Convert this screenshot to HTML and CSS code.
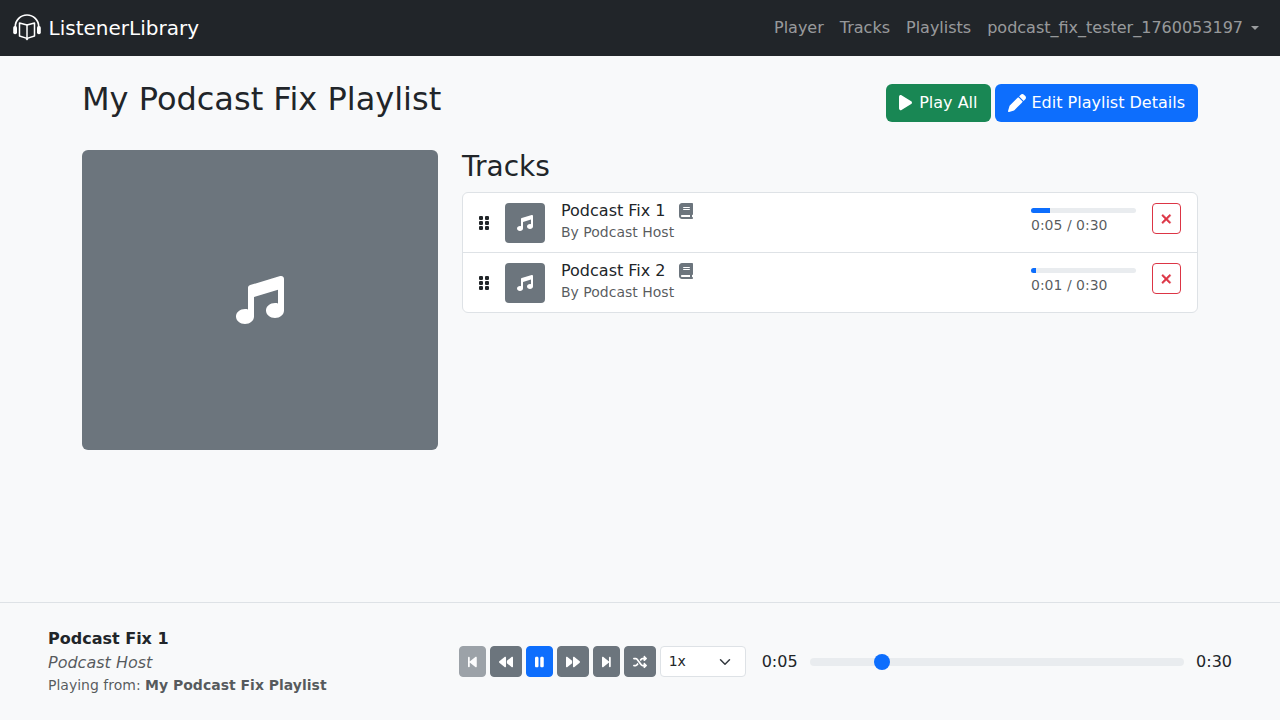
FILE: index.html
```html
<!DOCTYPE html>
<html lang="en">
<head>
<meta charset="utf-8">
<title>ListenerLibrary</title>
<link rel="stylesheet" href="styles.css">
</head>
<body>
<div class="app">
  <nav class="navbar">
    <a class="brand" href="#">
      <svg class="logo" viewBox="0 0 28 28" stroke="#fff" stroke-linejoin="round" stroke-linecap="round">
        <path d="M2.300 14V12.700a11.700 11.700 0 0 1 23.400 0V14" stroke-width="1.700"/>
        <rect x="0.200" y="12" width="3.800" height="8.200" rx="1.800" fill="#fff" stroke="none"/>
        <rect x="24" y="12" width="3.800" height="8.200" rx="1.800" fill="#fff" stroke="none"/>
        <path d="M14 11 6.500 9V22l7.500 2.400L21.500 22V9z" stroke-width="1.500"/>
        <path d="M14 11V24.400" stroke-width="1.500"/>
        <path d="M12.300 24.700 14 26.400l1.700-1.700z" fill="#fff" stroke="none"/>
      </svg>
      <span>ListenerLibrary</span>
    </a>
    <div class="nav-links">
      <a href="#">Player</a>
      <a href="#">Tracks</a>
      <a href="#">Playlists</a>
      <a href="#" class="dropdown">podcast_fix_tester_1760053197</a>
    </div>
  </nav>

  <main class="container">
    <header class="page-head">
      <h1>My Podcast Fix Playlist</h1>
      <div class="head-actions">
        <button class="btn btn-success">
          <svg class="icon" viewBox="0 0 384 512"><path d="M73 39c-14.800-9.100-33.400-9.400-48.500-.9S0 62.600 0 80V432c0 17.400 9.400 33.400 24.500 41.900s33.700 8.100 48.500-.9L361 297c14.300-8.700 23-24.200 23-41s-8.700-32.200-23-41L73 39z"/></svg>
          Play All
        </button>
        <button class="btn btn-primary">
          <svg class="icon" viewBox="0 0 512 512"><path d="M410.300 231l11.300-11.300-33.900-33.900-62.100-62.100L291.700 89.800l-11.300 11.300-22.600 22.600L58.600 322.900c-10.400 10.400-18 23.300-22.200 37.400L1 480.700c-2.500 8.400-.2 17.500 6.100 23.700s15.300 8.500 23.700 6.100l120.300-35.400c14.100-4.200 27-11.800 37.400-22.200L387.700 253.700 410.300 231zM362.700 18.700L348.300 33.200 325.700 55.800 314.300 67.100l33.900 33.900 62.100 62.100 33.900 33.900 11.300-11.300 22.600-22.600 14.500-14.500c25-25 25-65.500 0-90.500L453.300 18.700c-25-25-65.500-25-90.500 0z"/></svg>
          Edit Playlist Details
        </button>
      </div>
    </header>

    <div class="content">
      <div class="cover">
        <svg class="cover-icon" viewBox="0 0 512 512"><path d="M499.100 6.300c8.100 6 12.900 15.600 12.900 25.700v72V368c0 44.200-43 80-96 80s-96-35.800-96-80s43-80 96-80c11.200 0 22 1.600 32 4.600V147L192 223.800V432c0 44.200-43 80-96 80s-96-35.800-96-80s43-80 96-80c11.200 0 22 1.600 32 4.600V200 128c0-14.100 9.300-26.600 22.800-30.700l320-96c10.100-3 21-1.200 29.300 5z"/></svg>
      </div>
      <section class="tracks">
        <h2>Tracks</h2>
        <ul class="track-list">
          <li class="track">
            <svg class="grip" viewBox="0 0 320 512"><path d="M40 352h48c22.100 0 40 17.900 40 40v48c0 22.100-17.900 40-40 40H40c-22.100 0-40-17.900-40-40v-48c0-22.100 17.900-40 40-40zm192 0h48c22.100 0 40 17.900 40 40v48c0 22.100-17.900 40-40 40h-48c-22.100 0-40-17.900-40-40v-48c0-22.100 17.900-40 40-40zM40 192h48c22.100 0 40 17.900 40 40v48c0 22.100-17.900 40-40 40H40c-22.100 0-40-17.900-40-40v-48c0-22.100 17.900-40 40-40zm192 0h48c22.100 0 40 17.900 40 40v48c0 22.100-17.900 40-40 40h-48c-22.100 0-40-17.900-40-40v-48c0-22.100 17.900-40 40-40zM40 32h48c22.100 0 40 17.900 40 40v48c0 22.100-17.900 40-40 40H40c-22.100 0-40-17.900-40-40V72c0-22.100 17.900-40 40-40zm192 0h48c22.100 0 40 17.900 40 40v48c0 22.100-17.900 40-40 40h-48c-22.100 0-40-17.900-40-40V72c0-22.100 17.900-40 40-40z"/></svg>
            <div class="thumb"><svg class="thumb-icon" viewBox="0 0 512 512"><path d="M499.100 6.300c8.100 6 12.900 15.600 12.900 25.700v72V368c0 44.200-43 80-96 80s-96-35.800-96-80s43-80 96-80c11.200 0 22 1.600 32 4.600V147L192 223.800V432c0 44.200-43 80-96 80s-96-35.800-96-80s43-80 96-80c11.200 0 22 1.600 32 4.600V200 128c0-14.100 9.300-26.600 22.800-30.700l320-96c10.100-3 21-1.200 29.300 5z"/></svg></div>
            <div class="track-info">
              <div class="track-name">Podcast Fix 1
                <svg class="book" viewBox="0 0 448 512"><path d="M96 0C43 0 0 43 0 96V416c0 53 43 96 96 96H384h32c17.700 0 32-14.300 32-32s-14.300-32-32-32V384c17.700 0 32-14.300 32-32V32c0-17.700-14.300-32-32-32H384 96zm0 384H352v64H96c-17.700 0-32-14.300-32-32s14.300-32 32-32zm32-240c0-8.800 7.200-16 16-16H336c8.800 0 16 7.200 16 16s-7.200 16-16 16H144c-8.800 0-16-7.200-16-16zm16 48H336c8.800 0 16 7.200 16 16s-7.200 16-16 16H144c-8.800 0-16-7.200-16-16s7.200-16 16-16z"/></svg>
              </div>
              <div class="track-by">By Podcast Host</div>
            </div>
            <div class="track-progress">
              <div class="bar"><div class="bar-fill" style="width:18%"></div></div>
              <div class="bar-time">0:05 / 0:30</div>
            </div>
            <button class="btn-del"><svg class="x" viewBox="0 0 384 512"><path d="M342.600 150.600c12.500-12.500 12.500-32.800 0-45.300s-32.800-12.500-45.300 0L192 210.700 86.600 105.400c-12.500-12.500-32.800-12.500-45.300 0s-12.500 32.800 0 45.300L146.700 256 41.400 361.400c-12.500 12.500-12.500 32.800 0 45.300s32.800 12.500 45.300 0L192 301.300 297.400 406.600c12.500 12.500 32.800 12.500 45.300 0s12.500-32.800 0-45.300L237.300 256 342.600 150.600z"/></svg></button>
          </li>
          <li class="track">
            <svg class="grip" viewBox="0 0 320 512"><path d="M40 352h48c22.100 0 40 17.900 40 40v48c0 22.100-17.900 40-40 40H40c-22.100 0-40-17.900-40-40v-48c0-22.100 17.900-40 40-40zm192 0h48c22.100 0 40 17.900 40 40v48c0 22.100-17.900 40-40 40h-48c-22.100 0-40-17.900-40-40v-48c0-22.100 17.900-40 40-40zM40 192h48c22.100 0 40 17.900 40 40v48c0 22.100-17.900 40-40 40H40c-22.100 0-40-17.900-40-40v-48c0-22.100 17.900-40 40-40zm192 0h48c22.100 0 40 17.900 40 40v48c0 22.100-17.900 40-40 40h-48c-22.100 0-40-17.900-40-40v-48c0-22.100 17.900-40 40-40zM40 32h48c22.100 0 40 17.900 40 40v48c0 22.100-17.900 40-40 40H40c-22.100 0-40-17.900-40-40V72c0-22.100 17.900-40 40-40zm192 0h48c22.100 0 40 17.900 40 40v48c0 22.100-17.900 40-40 40h-48c-22.100 0-40-17.900-40-40V72c0-22.100 17.900-40 40-40z"/></svg>
            <div class="thumb"><svg class="thumb-icon" viewBox="0 0 512 512"><path d="M499.100 6.300c8.100 6 12.900 15.600 12.900 25.700v72V368c0 44.200-43 80-96 80s-96-35.800-96-80s43-80 96-80c11.200 0 22 1.600 32 4.600V147L192 223.800V432c0 44.200-43 80-96 80s-96-35.800-96-80s43-80 96-80c11.200 0 22 1.600 32 4.600V200 128c0-14.100 9.300-26.600 22.800-30.700l320-96c10.100-3 21-1.200 29.300 5z"/></svg></div>
            <div class="track-info">
              <div class="track-name">Podcast Fix 2
                <svg class="book" viewBox="0 0 448 512"><path d="M96 0C43 0 0 43 0 96V416c0 53 43 96 96 96H384h32c17.700 0 32-14.300 32-32s-14.300-32-32-32V384c17.700 0 32-14.300 32-32V32c0-17.700-14.300-32-32-32H384 96zm0 384H352v64H96c-17.700 0-32-14.300-32-32s14.300-32 32-32zm32-240c0-8.800 7.200-16 16-16H336c8.800 0 16 7.200 16 16s-7.200 16-16 16H144c-8.800 0-16-7.200-16-16zm16 48H336c8.800 0 16 7.200 16 16s-7.200 16-16 16H144c-8.800 0-16-7.200-16-16s7.200-16 16-16z"/></svg>
              </div>
              <div class="track-by">By Podcast Host</div>
            </div>
            <div class="track-progress">
              <div class="bar"><div class="bar-fill" style="width:5%"></div></div>
              <div class="bar-time">0:01 / 0:30</div>
            </div>
            <button class="btn-del"><svg class="x" viewBox="0 0 384 512"><path d="M342.600 150.600c12.500-12.500 12.500-32.800 0-45.300s-32.800-12.500-45.300 0L192 210.700 86.600 105.400c-12.500-12.500-32.800-12.500-45.300 0s-12.500 32.800 0 45.300L146.700 256 41.400 361.400c-12.500 12.500-12.500 32.800 0 45.300s32.800 12.500 45.300 0L192 301.300 297.400 406.600c12.500 12.500 32.800 12.500 45.300 0s12.500-32.800 0-45.300L237.300 256 342.600 150.600z"/></svg></button>
          </li>
        </ul>
      </section>
    </div>
  </main>

  <footer class="player">
    <div class="now-playing">
      <div class="np-title">Podcast Fix 1</div>
      <div class="np-artist">Podcast Host</div>
      <div class="np-from">Playing from: <strong>My Podcast Fix Playlist</strong></div>
    </div>
    <div class="controls">
      <button class="ctl ctl-disabled"><svg viewBox="0 0 320 512"><path d="M267.500 440.600c9.500 7.900 22.800 9.700 34.100 4.400s18.400-16.600 18.400-29V96c0-12.400-7.200-23.700-18.400-29s-24.500-3.600-34.100 4.400l-192 160L64 241V96c0-17.700-14.300-32-32-32S0 78.300 0 96V416c0 17.700 14.300 32 32 32s32-14.300 32-32V271l11.500 9.600 192 160z"/></svg></button>
      <button class="ctl"><svg viewBox="0 0 512 512"><path d="M459.500 440.600c9.500 7.900 22.800 9.700 34.100 4.400s18.400-16.600 18.400-29V96c0-12.400-7.200-23.700-18.400-29s-24.500-3.600-34.100 4.400L288 214.300V256v41.700L459.500 440.600zM256 352V256 128 96c0-12.400-7.200-23.700-18.400-29s-24.500-3.600-34.100 4.400l-192 160C4.200 237.500 0 246.500 0 256s4.200 18.500 11.500 24.600l192 160c9.500 7.900 22.800 9.700 34.100 4.400s18.400-16.600 18.400-29V352z"/></svg></button>
      <button class="ctl ctl-primary"><svg viewBox="0 0 320 512"><path d="M48 64C21.500 64 0 85.500 0 112V400c0 26.500 21.500 48 48 48H80c26.500 0 48-21.500 48-48V112c0-26.500-21.500-48-48-48H48zm192 0c-26.500 0-48 21.500-48 48V400c0 26.500 21.500 48 48 48h32c26.500 0 48-21.500 48-48V112c0-26.500-21.500-48-48-48H240z"/></svg></button>
      <button class="ctl"><svg viewBox="0 0 512 512"><path d="M52.500 440.600c-9.500 7.900-22.800 9.700-34.100 4.400S0 428.400 0 416V96C0 83.600 7.200 72.300 18.400 67s24.500-3.600 34.100 4.400L224 214.300V256v41.700L52.500 440.600zM256 352V256 128 96c0-12.400 7.200-23.700 18.400-29s24.500-3.600 34.100 4.400l192 160c7.300 6.100 11.500 15.100 11.500 24.600s-4.200 18.500-11.500 24.600l-192 160c-9.500 7.900-22.800 9.700-34.100 4.400s-18.400-16.600-18.400-29V352z"/></svg></button>
      <button class="ctl"><svg viewBox="0 0 320 512"><path d="M52.500 440.600c-9.500 7.900-22.800 9.700-34.100 4.400S0 428.400 0 416V96C0 83.600 7.200 72.300 18.400 67s24.500-3.600 34.100 4.400l192 160L256 241V96c0-17.700 14.300-32 32-32s32 14.300 32 32V416c0 17.700-14.300 32-32 32s-32-14.300-32-32V271l-11.500 9.600-192 160z"/></svg></button>
      <button class="ctl"><svg viewBox="0 0 512 512"><path d="M403.800 34.400c12-5 25.700-2.200 34.900 6.900l64 64c6 6 9.400 14.100 9.400 22.600s-3.400 16.600-9.400 22.600l-64 64c-9.200 9.200-22.900 11.900-34.900 6.900s-19.800-16.600-19.800-29.600V160H352c-10.100 0-19.600 4.700-25.600 12.800L284 229.300 244 176l31.200-41.600C293.300 110.200 321.800 96 352 96h32V64c0-12.900 7.800-24.600 19.800-29.600zM164 282.700L204 336l-31.200 41.600C154.700 401.800 126.200 416 96 416H32c-17.700 0-32-14.300-32-32s14.300-32 32-32H96c10.100 0 19.600-4.700 25.600-12.800L164 282.700zm274.600 188c-9.200 9.200-22.900 11.900-34.900 6.900s-19.800-16.600-19.800-29.600V416H352c-30.200 0-58.700-14.200-76.800-38.400L121.600 172.800c-6-8.100-15.500-12.800-25.600-12.800H32c-17.700 0-32-14.300-32-32s14.300-32 32-32H96c30.200 0 58.700 14.200 76.800 38.400L326.400 339.200c6 8.100 15.500 12.800 25.600 12.800h32V320c0-12.900 7.800-24.600 19.800-29.600s25.700-2.200 34.900 6.900l64 64c6 6 9.400 14.100 9.400 22.600s-3.400 16.600-9.400 22.600l-64 64z"/></svg></button>
      <div class="speed">
        <span>1x</span>
        <svg class="chev" viewBox="0 0 16 16" stroke="#343a40" stroke-width="2" stroke-linecap="round" stroke-linejoin="round"><path d="m2 5 6 6 6-6"/></svg>
      </div>
      <span class="time time-cur">0:05</span>
      <div class="seek"><div class="seek-thumb" style="left:19.25%"></div></div>
      <span class="time">0:30</span>
    </div>
  </footer>
</div>
</body>
</html>
```

FILE: styles.css
```css
* { box-sizing: border-box; }
html, body { margin: 0; padding: 0; }
body {
  font-family: "DejaVu Sans", sans-serif;
  font-size: 16px;
  line-height: 1.5;
  color: #212529;
  background: #f8f9fa;
}
a { text-decoration: none; color: inherit; }
svg { fill: currentColor; display: block; }
button { font: inherit; cursor: pointer; }

.app { min-height: 100vh; height: 720px; display: flex; flex-direction: column; }

.navbar {
  height: 56px;
  flex: none;
  background: #212529;
  display: flex;
  align-items: center;
  justify-content: space-between;
  padding: 0 13px 0 12px;
}
.brand { display: flex; align-items: center; gap: 7.6px; color: #fff; font-size: 20px; }
.logo { width: 28px; height: 28px; margin-left: 1px; fill: none; }
.nav-links { display: flex; color: rgba(255,255,255,.55); }
.nav-links a { padding: 8px; }
.dropdown { display: flex; align-items: center; }
.dropdown::after {
  content: "";
  margin-left: 8px;
  border-top: 4.8px solid currentColor;
  border-left: 4.8px solid transparent;
  border-right: 4.8px solid transparent;
}

.container { flex: 1; width: 1116px; margin: 0 auto; }
.page-head {
  display: flex;
  justify-content: space-between;
  align-items: flex-start;
  padding-top: 24px;
  margin-bottom: 28px;
}
h1 { margin: 0; font-size: 32px; font-weight: 400; line-height: 38px; }
.head-actions { display: flex; gap: 4px; margin-top: 4px; }
.btn {
  display: flex;
  align-items: center;
  gap: 4px;
  height: 38px;
  padding: 0 12px;
  border: 1px solid transparent;
  border-radius: 6px;
  color: #fff;
  white-space: nowrap;
}
.btn-success { background: #198754; }
.btn-primary { background: #0d6efd; }
.icon { width: 16px; height: 16px; }
.btn-success .icon { width: 13px; height: 17.3px; margin-right: 3px; }
.btn-primary .icon { width: 18px; height: 18px; margin-right: 2px; }

.content { display: grid; grid-template-columns: 356px 736px; column-gap: 24px; }
.cover {
  height: 300px;
  background: #6c757d;
  border-radius: 6px;
  display: flex;
  align-items: center;
  justify-content: center;
  color: #fff;
}
.cover-icon { width: 48px; height: 48px; }

h2 { margin: 0 0 8px; font-size: 28px; font-weight: 400; line-height: 34px; }
.track-list {
  list-style: none;
  margin: 0;
  padding: 0;
  background: #fff;
  border: 1px solid #dee2e6;
  border-radius: 6px;
}
.track {
  display: flex;
  align-items: flex-start;
  height: 60px;
  padding: 10px 16px 0 15px;
  border-bottom: 1px solid #dee2e6;
}
.track:last-child { height: 59px; border-bottom: 0; }
.grip { width: 12px; height: 16px; margin-top: 12px; margin-right: 15px; flex: none; }
.thumb {
  width: 40px;
  height: 40px;
  flex: none;
  border-radius: 4px;
  background: #6c757d;
  color: #fff;
  display: flex;
  align-items: center;
  justify-content: center;
  margin-right: 16px;
}
.thumb-icon { width: 16px; height: 16px; }
.track-info { flex: 1; margin-top: -4px; }
.track-name { display: flex; align-items: center; gap: 13px; height: 24px; }
.book { width: 14px; height: 16px; margin-top: -1px; color: #6c757d; }
.track-by { font-size: 14px; line-height: 21px; margin-top: -1px; color: rgba(33,37,41,.75); }
.track-progress { width: 105px; flex: none; margin-right: 16px; }
.bar { height: 5px; margin-top: 5px; background: #e9ecef; border-radius: 3px; overflow: hidden; }
.bar-fill { height: 100%; background: #0d6efd; }
.bar-time { font-size: 14px; line-height: 21px; color: rgba(33,37,41,.75); margin-top: 2px; }
.btn-del {
  width: 29px;
  height: 31px;
  padding: 0;
  flex: none;
  display: flex;
  align-items: center;
  justify-content: center;
  background: transparent;
  border: 1px solid #dc3545;
  border-radius: 4px;
  color: #dc3545;
}
.x { width: 10.5px; height: 14px; stroke: currentColor; stroke-width: 20; }

.player {
  height: 118px;
  flex: none;
  border-top: 1px solid #dee2e6;
  display: flex;
  align-items: center;
  padding: 0 48px;
}
.now-playing { width: 411.4px; flex: none; }
.np-title { font-weight: 700; }
.np-artist { font-style: italic; color: rgba(33,37,41,.75); }
.np-from { font-size: 14px; line-height: 21px; color: rgba(33,37,41,.75); }
.controls { flex: 1; display: flex; align-items: center; gap: 4px; }
.ctl {
  height: 31px;
  padding: 0 8px;
  border: 1px solid #6c757d;
  border-radius: 4px;
  background: #6c757d;
  color: #fff;
  display: flex;
  align-items: center;
}
.ctl svg { height: 14px; width: auto; }
.ctl-disabled { opacity: .65; }
.ctl-primary { background: #0d6efd; border-color: #0d6efd; }
.speed {
  width: 86px;
  height: 31px;
  background: #fff;
  border: 1px solid #dee2e6;
  border-radius: 4px;
  display: flex;
  align-items: center;
  justify-content: space-between;
  padding: 0 14px 0 8px;
  font-size: 14px;
}
.chev { width: 12px; height: 12px; fill: none; }
.time { font-size: 16px; }
.time-cur { margin-left: 12px; }
.seek {
  flex: 1;
  height: 8px;
  margin: 0 8px;
  background: #e9ecef;
  border-radius: 4px;
  position: relative;
}
.seek-thumb {
  position: absolute;
  top: -4px;
  width: 16px;
  height: 16px;
  margin-left: -8px;
  border-radius: 50%;
  background: #0d6efd;
}
```
